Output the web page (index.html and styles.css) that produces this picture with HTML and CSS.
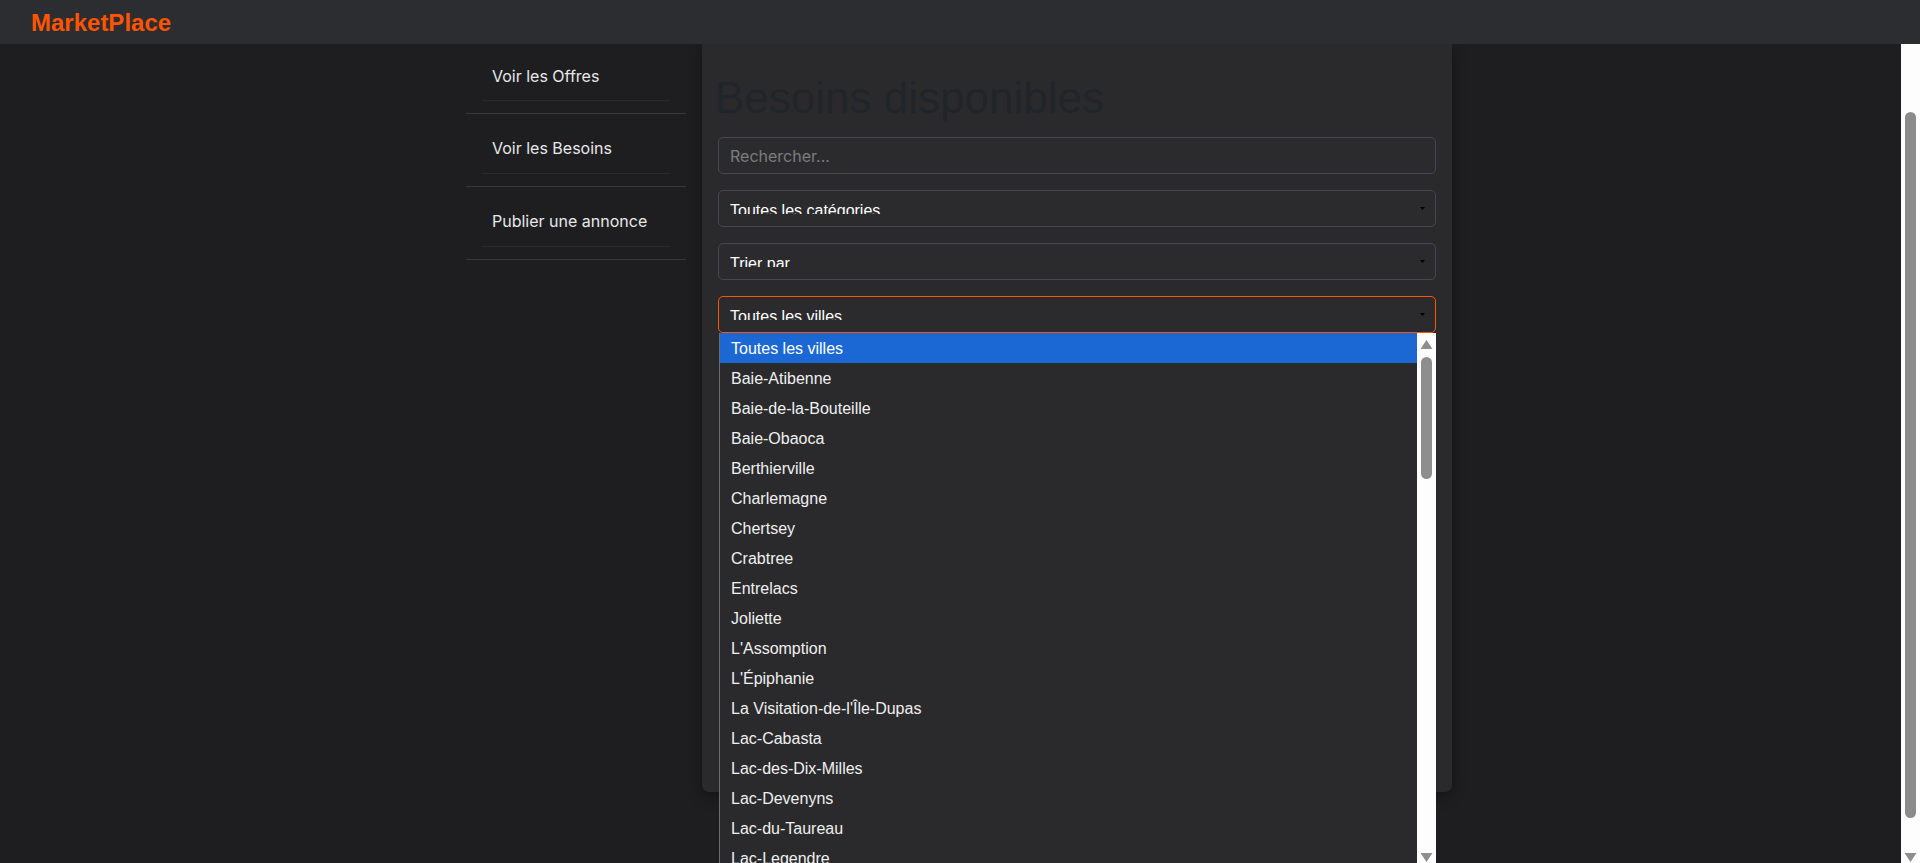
FILE: index.html
```html
<!DOCTYPE html>
<html lang="fr">
<head>
<meta charset="utf-8">
<title>MarketPlace - Besoins disponibles</title>
<link rel="stylesheet" href="styles.css">
</head>
<body>
<header class="topbar"><span class="brand">MarketPlace</span></header>
<div class="viewport">
  <div class="page">
    <nav class="sidebar">
      <ul class="nav">
        <li class="nav-item"><a class="nav-link" href="#">Voir les Offres</a></li>
        <li class="nav-item"><a class="nav-link" href="#">Voir les Besoins</a></li>
        <li class="nav-item"><a class="nav-link" href="#">Publier une annonce</a></li>
      </ul>
    </nav>
    <main class="card">
      <h1 class="title">Besoins disponibles</h1>
      <div class="filters">
        <input class="field" type="text" placeholder="Rechercher...">
        <div class="select"><span class="select-value">Toutes les catégories</span><span class="caret"></span></div>
        <div class="select"><span class="select-value">Trier par</span><span class="caret"></span></div>
        <div class="select is-open"><span class="select-value">Toutes les villes</span><span class="caret"></span>
          <div class="dropdown">
            <ul class="options">
              <li class="option is-selected">Toutes les villes</li>
              <li class="option">Baie-Atibenne</li>
              <li class="option">Baie-de-la-Bouteille</li>
              <li class="option">Baie-Obaoca</li>
              <li class="option">Berthierville</li>
              <li class="option">Charlemagne</li>
              <li class="option">Chertsey</li>
              <li class="option">Crabtree</li>
              <li class="option">Entrelacs</li>
              <li class="option">Joliette</li>
              <li class="option">L'Assomption</li>
              <li class="option">L'Épiphanie</li>
              <li class="option">La Visitation-de-l'Île-Dupas</li>
              <li class="option">Lac-Cabasta</li>
              <li class="option">Lac-des-Dix-Milles</li>
              <li class="option">Lac-Devenyns</li>
              <li class="option">Lac-du-Taureau</li>
              <li class="option">Lac-Legendre</li>
            </ul>
            <div class="list-scroll">
              <span class="arrow arrow-up"></span>
              <span class="list-thumb"></span>
              <span class="arrow arrow-down"></span>
            </div>
          </div>
        </div>
      </div>
    </main>
  </div>
  <div class="scrollbar">
    <span class="page-thumb"></span>
    <span class="arrow arrow-down"></span>
  </div>
</div>
</body>
</html>
```
FILE: styles.css
```css
* { box-sizing: border-box; }
html, body { margin: 0; height: 100%; overflow: hidden; }
body {
  background: #1e1e20;
  font-family: Inter, "Liberation Sans", Arial, sans-serif;
  color: #e8e8ea;
  display: flex;
  flex-direction: column;
}
.topbar {
  flex: none;
  height: 44px;
  background: #2c2d30;
  padding: 9px 31px 0;
  position: relative;
  z-index: 2;
}
.brand {
  display: block;
  font-family: "Liberation Sans", Arial, sans-serif;
  font-weight: 700;
  font-size: 24px;
  line-height: 28px;
  color: #ff5500;
}
.viewport { flex: 1; min-height: 0; display: flex; }
.page {
  flex: 1;
  display: flex;
  align-items: flex-start;
  gap: 16px;
  padding-left: 466px;
}
.sidebar { width: 220px; flex: none; margin-top: -3px; }
.nav { list-style: none; margin: 0; padding: 0; }
.nav-item { padding: 12px 16px; border-bottom: 1px solid #38383b; }
.nav-link {
  display: block;
  padding: 12px 10px 14px;
  border-bottom: 1px solid #2a2a2d;
  color: #e8e8ea;
  text-decoration: none;
  font-size: 16px;
  line-height: 21px;
}
.nav-item:first-child .nav-link { padding-top: 13px; padding-bottom: 13px; }
.card {
  width: 750px;
  height: 748px;
  flex: none;
  background: #2a2a2d;
  border-radius: 0 0 7px 7px;
  box-shadow: 0 4px 14px rgba(0, 0, 0, 0.35);
  padding: 28px 16px 16px;
}
.title {
  margin: 0 0 13px -3px;
  font-family: "Liberation Sans", Arial, sans-serif;
  font-weight: 400;
  font-size: 44px;
  line-height: 52px;
  color: #212529;
}
.filters { display: flex; flex-direction: column; gap: 16px; }
.field {
  display: block;
  width: 100%;
  height: 37px;
  margin: 0;
  border: 1px solid #47474b;
  border-radius: 5px;
  background: #2b2b2e;
  color: #fff;
  font: 16px Inter, sans-serif;
  padding: 0 11px;
  outline: none;
}
.field::placeholder { color: #7c7c80; }
.select {
  position: relative;
  display: flex;
  align-items: center;
  height: 37px;
  border: 1px solid #47474b;
  border-radius: 5px;
  background: #2b2b2e;
  padding: 0 10px 0 11px;
  font-family: "Liberation Sans", Arial, sans-serif;
  font-size: 16px;
  color: #fff;
}
.select-value {
  flex: 1;
  align-self: flex-start;
  margin-top: 11px;
  height: 12px;
  overflow: hidden;
  line-height: normal;
  white-space: nowrap;
}
.caret {
  flex: none;
  width: 5px;
  height: 3px;
  background: #000;
  clip-path: polygon(0 0, 100% 0, 50% 100%);
}
.select.is-open { border-color: #ff5500; }
.dropdown {
  position: absolute;
  top: calc(100% + 1px);
  left: 0;
  right: -1px;
  height: 530px;
  display: flex;
  background: #2a2a2d;
  border-left: 1px solid #6d6d70;
  z-index: 5;
}
.options { flex: 1; list-style: none; margin: 0; padding: 0; overflow: hidden; }
.option {
  height: 30px;
  padding: 2px 0 0 11px;
  line-height: 28px;
  color: #f0f0f0;
  white-space: nowrap;
}
.option.is-selected { background: #1b68d4; color: #fff; }
.list-scroll, .scrollbar {
  flex: none;
  width: 19px;
  background: #fdfdfd;
  display: flex;
  flex-direction: column;
  align-items: center;
}
.arrow { flex: none; width: 12px; height: 9px; background: #8e8e8e; }
.arrow-up { clip-path: polygon(50% 0, 100% 100%, 0 100%); margin-top: 7px; }
.arrow-down { clip-path: polygon(0 0, 100% 0, 50% 100%); margin-top: auto; margin-bottom: 1px; }
.list-thumb { flex: none; width: 11px; height: 122px; margin-top: 8px; border-radius: 6px; background: #8e8e8e; }
.page-thumb { flex: none; width: 11px; height: 706px; margin-top: 68px; border-radius: 6px; background: #8b8b8b; }
```
